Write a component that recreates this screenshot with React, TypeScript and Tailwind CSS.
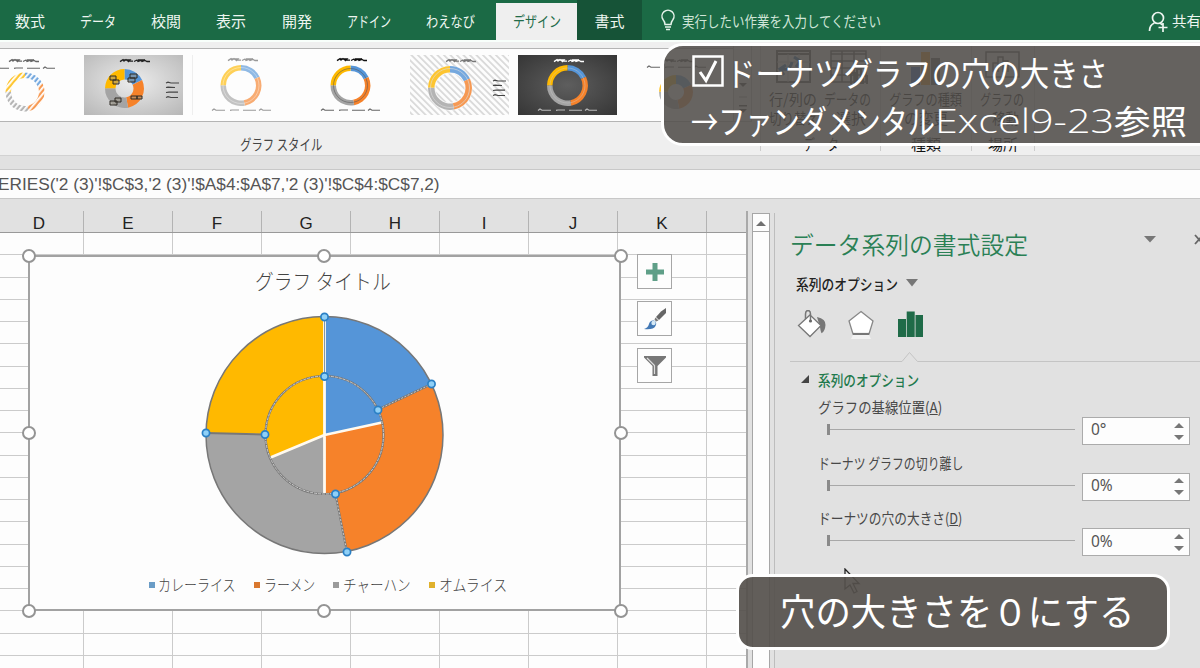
import { useLayoutEffect, useRef, useState, type ReactNode } from "react";

/* Text squeezed or stretched horizontally to a fixed width. */
function Fit({ w, className = "", children }: { w: number; className?: string; children: ReactNode }) {
  const ref = useRef<HTMLSpanElement>(null);
  const [scale, setScale] = useState(1);
  useLayoutEffect(() => {
    if (ref.current) setScale(w / ref.current.offsetWidth);
  }, [w]);
  return (
    <span className={"block shrink-0 leading-none whitespace-pre " + className} style={{ width: w }}>
      <span ref={ref} className="inline-block origin-left" style={{ transform: `scaleX(${scale})` }}>
        {children}
      </span>
    </span>
  );
}

const BLUE = "#5595d8";
const ORANGE = "#f6822a";
const GRAY = "#a4a4a4";
const YELLOW = "#ffb900";

function point(cx: number, cy: number, r: number, deg: number) {
  const a = ((deg - 90) * Math.PI) / 180;
  return [cx + r * Math.cos(a), cy + r * Math.sin(a)];
}

function ring(cx: number, cy: number, r1: number, r0: number, from: number, to: number) {
  const [ax, ay] = point(cx, cy, r1, from);
  const [bx, by] = point(cx, cy, r1, to);
  const [dx, dy] = point(cx, cy, r0, to);
  const [ex, ey] = point(cx, cy, r0, from);
  const big = to - from > 180 ? 1 : 0;
  return `M${ax} ${ay}A${r1} ${r1} 0 ${big} 1 ${bx} ${by}L${dx} ${dy}A${r0} ${r0} 0 ${big} 0 ${ex} ${ey}Z`;
}

const outer = [
  [0, 64.5, BLUE],
  [64.5, 169.3, ORANGE],
  [169.3, 271, GRAY],
  [271, 360, YELLOW],
] as const;
const inner = [
  [0, 78, BLUE],
  [78, 180, ORANGE],
  [180, 247.5, GRAY],
  [247.5, 360, YELLOW],
] as const;

function Donut({ x, y, r, hole, opacity = 1 }: { x: number; y: number; r: number; hole: number; opacity?: number }) {
  return (
    <g opacity={opacity}>
      {outer.map(([a, b, c]) => (
        <path key={a} d={ring(x, y, r, hole, a, b)} fill={c} />
      ))}
    </g>
  );
}

function Caption({ x, y, color = "#222" }: { x: number; y: number; color?: string }) {
  return (
    <path
      d={`M${x} ${y + 1.6}l3-2 1 1.500 2-1.500 2 1.500h5M${x + 3} ${y}h7l-2 2M${x + 14} ${y + 1.5}l3-1.500 1 1.500 3-1.200 1 1.200 3-1 2 1h3M${x + 18} ${y}h7`}
      stroke={color}
      strokeWidth="1.300"
      fill="none"
    />
  );
}

function LegendRow({ x, y, color = "#666" }: { x: number; y: number; color?: string }) {
  return (
    <path
      d={`M${x} ${y + 0.5}l2-1.500 2 1.200h9M${x + 18} ${y + 0.4}l2-.4h7M${x + 31} ${y + 0.2}h13M${x + 47} ${y + 0.5}l2-1.500 2 1.200h8`}
      stroke={color}
      strokeWidth="1.100"
      fill="none"
    />
  );
}

function LegendColumn({ x, y }: { x: number; y: number }) {
  return (
    <path
      d={`M${x} ${y}l2-.8 3 .8h8M${x} ${y + 4.5}l2-.4 7 .4M${x} ${y + 9.5}l3-.4h9M${x} ${y + 14.5}l2-.8 3 .8h7`}
      stroke="#444"
      strokeWidth="1.200"
      fill="none"
    />
  );
}

function Thumb({ children }: { children: ReactNode }) {
  return (
    <svg width="99" height="60" viewBox="0 0 99 60" className="shrink-0">
      {children}
    </svg>
  );
}

function Gallery() {
  return (
    <div className="mt-[6px] flex h-[74px] gap-[9.700px] border-y border-[#b4b4b4] bg-[#fdfdfd] pt-[6px] pl-[1px]">
      <div className="-ml-[26px] h-[60px]">
        <Thumb>
          <defs>
            <pattern id="stripes" width="4" height="4" patternUnits="userSpaceOnUse" patternTransform="rotate(40)">
              <rect width="1.800" height="4" fill="#fff" />
            </pattern>
          </defs>
          <Donut x={50} y={37} r={19.5} hole={14} opacity={0.8} />
          <circle cx="50" cy="37" r="17" stroke="url(#stripes)" strokeWidth="7" fill="none" />
          <Caption x={34} y={5} color="#666" />
          <LegendRow x={21} y={13} />
        </Thumb>
      </div>
      <Thumb>
        <defs>
          <radialGradient id="silver" cx=".5" cy=".45" r=".75">
            <stop offset="0" stopColor="#ececec" />
            <stop offset="1" stopColor="#b6b6b6" />
          </radialGradient>
        </defs>
        <rect width="99" height="60" fill="url(#silver)" />
        <Donut x={40.5} y={33.5} r={19.5} hole={9} />
        <g fill="#9a9484" fillOpacity=".5" stroke="#2e2a24" strokeWidth="1">
          <path d="M26 21h6v4h-6zM29 25h6v4h-6zM46 19h7v4h-7zM44 23h7v4h-7zM31 43h6v4h-6zM26 46h7v4h-7zM47 41h6v3h-6zM53 41h5v3h-5z" />
        </g>
        <Caption x={36} y={5} />
        <LegendColumn x={82} y={28} />
      </Thumb>
      <Thumb>
        <path d="M.5 0v60" stroke="#eee" />
        <Donut x={49} y={30.5} r={20.5} hole={15} opacity={0.65} />
        <circle cx="49" cy="30.500" r="18" stroke="#fff" strokeOpacity=".35" fill="none" />
        <Caption x={36} y={4} color="#999" />
        <LegendRow x={20} y={55} color="#999" />
      </Thumb>
      <Thumb>
        <Donut x={49.5} y={30.5} r={20} hole={14.5} />
        <circle cx="49.500" cy="30.500" r="17" stroke="#555" strokeOpacity=".55" fill="none" />
        <Caption x={36} y={4} color="#111" />
        <LegendRow x={20} y={55} />
      </Thumb>
      <Thumb>
        <defs>
          <pattern id="hatch" width="4.600" height="4.600" patternUnits="userSpaceOnUse" patternTransform="rotate(-45)">
            <rect width="1.800" height="4.600" fill="#dadada" />
          </pattern>
        </defs>
        <rect width="99" height="60" fill="url(#hatch)" />
        <circle cx="40" cy="33" r="18.500" stroke="#f8f8f8" strokeWidth="8" fill="none" />
        <Donut x={40} y={33} r={22} hole={15.5} opacity={0.8} />
        <circle cx="40" cy="33" r="19.500" stroke="#ddd" strokeOpacity=".6" fill="none" />
        <Caption x={36} y={5} color="#777" />
        <LegendColumn x={83} y={26} />
      </Thumb>
      <Thumb>
        <defs>
          <radialGradient id="dark" cx=".5" cy=".5" r=".7">
            <stop offset="0" stopColor="#5e5e5e" />
            <stop offset="1" stopColor="#363636" />
          </radialGradient>
        </defs>
        <rect width="99" height="60" fill="url(#dark)" />
        <Donut x={49.5} y={30.5} r={20.5} hole={15} />
        <circle cx="49.500" cy="30.500" r="17.500" stroke="#ccc" strokeOpacity=".4" fill="none" />
        <Caption x={36} y={5} color="#fff" />
        <LegendRow x={20} y={55} color="#bbb" />
      </Thumb>
      <Thumb>
        <Donut x={49} y={37} r={17} hole={8} opacity={0.8} />
        <Caption x={36} y={5} color="#555" />
        <LegendRow x={20} y={12} />
      </Thumb>
    </div>
  );
}

function RibbonButtons() {
  return (
    <div className="absolute top-[43px] left-[733px] flex h-[108px] w-[467px] bg-[#efefef] text-[15px] text-[#111]">
      <div className="flex h-[79px] w-[19px] flex-col items-center border-x border-b border-[#bbb] pt-[40px]">
        <svg width="8" height="34" viewBox="0 0 8 34">
          <path d="M0 0h8L4 4zM0 22h8v1.500H0zM0 26h8l-4 4z" fill="#444" />
          <path d="M0 14h8" stroke="#999" />
        </svg>
      </div>
      <div className="ml-[8px] flex w-[121px] flex-col border-x border-[#ccc]">
        <div className="flex pt-[6px] pl-2">
          <svg width="110" height="40" viewBox="0 0 110 40" fill="none" stroke="#555">
            <path d="M8 2h33v31H8zM8 5h33" strokeWidth="2" />
            <path d="M8 13h33M8 21h33M19 5v28M30 5v28" stroke="#bbb" />
            <path d="M15 26l-4-6 6-4M13 20q8 2 10-7M25 8l6 4-4 6" stroke="#2d6fae" strokeWidth="3" />
            <path d="M62 2h35v31H62zM62 5h35M62 12h35M62 19h35M62 26h35M73 2v31M85 2v31" strokeWidth="1.500" />
            <path d="M82 35V24h4v11M88 35V20h4v15M94 35V27h4v8" strokeWidth="2" />
          </svg>
        </div>
        <div className="mt-[2px] flex gap-[7px] pl-2">
          <Fit w={48}>行/列の</Fit>
          <Fit w={47}>データの</Fit>
        </div>
        <div className="mt-1 flex gap-[17px] pl-2">
          <Fit w={50}>切り替え</Fit>
          <Fit w={30}>選択</Fit>
        </div>
        <div className="mt-auto pl-[42px]"><Fit w={36}>データ</Fit></div>
      </div>
      <div className="flex w-[91px] flex-col border-r border-[#ccc] pl-2">
        <svg width="72" height="40" viewBox="0 0 72 40" className="mt-[6px]">
          <path d="M22 18h9v18h-9z" fill="#3a6cc8" />
          <path d="M32 3h9v33h-9z" fill="#f09a20" />
          <path d="M42 9h9v27h-9z" fill="#666" />
        </svg>
        <div className="mt-[2px]"><Fit w={73}>グラフの種類</Fit></div>
        <div className="mt-1 pl-[15px]"><Fit w={44}>の変更</Fit></div>
        <div className="mt-auto pl-[22px]"><Fit w={30}>種類</Fit></div>
      </div>
      <div className="flex w-[63px] flex-col border-r border-[#ccc] pl-2">
        <svg width="44" height="40" viewBox="0 0 44 40" className="mt-[6px]" fill="none" stroke="#555">
          <path d="M6 3h33v25H6z" strokeWidth="1.500" />
          <path d="M13 23v-9h5v9M18 23V8h5v15M23 23V12h5v11" strokeWidth="1.500" />
        </svg>
        <div className="mt-[2px]"><Fit w={44}>グラフの</Fit></div>
        <div className="mt-1 pl-[12px]"><Fit w={27}>移動</Fit></div>
        <div className="mt-auto pl-[8px]"><Fit w={30}>場所</Fit></div>
      </div>
    </div>
  );
}

function Tabs() {
  return (
    <nav className="flex h-[40px] shrink-0 bg-[#1b6a45] text-[15px] text-[#eef6f1]">
      <div className="flex items-center pl-[15px]">
        <Fit w={30}>数式</Fit>
        <Fit w={36} className="ml-[35px]">データ</Fit>
        <Fit w={30} className="ml-[35px]">校閲</Fit>
        <Fit w={30} className="ml-[35px]">表示</Fit>
        <Fit w={30} className="ml-[36px]">開発</Fit>
        <Fit w={44} className="ml-[35px]">アドイン</Fit>
        <Fit w={49} className="ml-[35px]">わえなび</Fit>
      </div>
      <div className="mt-[3px] ml-auto flex w-[81px] items-center justify-center bg-[#efefef] pb-[3px] text-[#226b49]">
        <Fit w={48}>デザイン</Fit>
      </div>
      <div className="flex w-[65px] items-center justify-center bg-[#165337]">
        <Fit w={30}>書式</Fit>
      </div>
      <div className="flex w-[558px] items-center pl-[18px] text-[#cfe5d8]">
        <svg width="16" height="22" viewBox="0 0 16 22" fill="none" stroke="#e6f3eb" strokeWidth="1.500">
          <path d="M5 15.500q0-2.500-2-5a6 6 0 1 1 10 0q-2 2.500-2 5zM5 18h6M6 20.500h4" />
        </svg>
        <Fit w={199} className="ml-[6px]">実行したい作業を入力してください</Fit>
        <svg width="21" height="21" viewBox="0 0 21 21" className="mt-[2px] ml-[267px] shrink-0" fill="none" stroke="#eef6f1" strokeWidth="1.700">
          <circle cx="10" cy="7" r="5.500" />
          <path d="M1.500 20q0-6 5-8M12 12q1.500 1 2 2M10.500 16.500h9M15 12v9" />
        </svg>
        <div className="ml-[3px] w-[28px] overflow-hidden text-[#eef6f1]"><Fit w={29}>共有</Fit></div>
      </div>
    </nav>
  );
}

const handles = [
  [29, 256], [324, 256], [621, 256],
  [29, 433], [621, 433],
  [29, 610.5], [324, 610.5], [621, 610.5],
];

function Chart() {
  return (
    <>
      <div className="absolute top-[255px] left-[28px] flex h-[356px] w-[593px] flex-col border-2 border-[#a2a2a2] bg-[#fdfdfd] text-[#444]">
        <div className="pt-[13px] pl-[225px] text-[21px] font-light"><Fit w={136}>グラフ タイトル</Fit></div>
        <svg width="260" height="260" viewBox="194 305 260 260" className="mt-[14px] ml-[164px] shrink-0">
          {outer.map(([a, b, c]) => (
            <path key={a} d={ring(324.5, 435, 118.5, 59, a, b)} fill={c} />
          ))}
          {inner.map(([a, b, c]) => (
            <path key={a} d={ring(324.5, 435, 59, 0, a, b)} fill={c} />
          ))}
          <path d="M324.500 317v177M324.500 435l57.500-12.500M324.500 435l-54 22.500" stroke="#fffaf0" strokeWidth="2.800" />
          <path d="M324.500 317v59" stroke="#8298a8" strokeWidth="1" />
          <g fill="none" stroke="#777" strokeWidth="1.200">
            <circle cx="324.500" cy="435" r="118.500" strokeWidth="1.500" />
            <circle cx="324.500" cy="435" r="59" strokeWidth="2.200" />
            <path d="M431.500 384L378 409.500M347 552l-11.500-58M206 433l59 1.500" strokeWidth="2" />
          </g>
          <g fill="none" stroke="#ddd" strokeWidth=".8">
            <circle cx="324.500" cy="435" r="59" strokeDasharray="3 1" />
            <path d="M431.500 384L378 409.500M347 552l-11.500-58" strokeDasharray="2 1.500" />
          </g>
          <g fill="#8fd0f7" stroke="#2b80c5" strokeWidth="1.700">
            {[[324.5, 317], [431.5, 384], [347, 552], [206, 433], [324.5, 376.5], [378, 410], [335.5, 494], [265, 434.5]].map(
              ([x, y]) => <circle key={`${x}-${y}`} cx={x} cy={y} r="3.600" />
            )}
          </g>
        </svg>
        <div className="mt-[11px] flex items-center pl-[119px] text-[16px] font-light">
          <i className="mt-[2px] size-[6px] bg-[#6a9cc6]" /><Fit w={78} className="ml-[3px]">カレーライス</Fit>
          <i className="mt-[2px] ml-[18px] size-[6px] bg-[#d9782f]" /><Fit w={51} className="ml-[4px]">ラーメン</Fit>
          <i className="mt-[2px] ml-[18px] size-[6px] bg-[#9b9b9b]" /><Fit w={68} className="ml-[4px]">チャーハン</Fit>
          <i className="mt-[2px] ml-[18px] size-[6px] bg-[#e0b12c]" /><Fit w={68} className="ml-[4px]">オムライス</Fit>
        </div>
      </div>
      {handles.map(([x, y]) => (
        <span
          key={`${x}-${y}`}
          className="absolute size-[14px] rounded-full border-[2.500px] border-[#949494] bg-white"
          style={{ left: x - 7, top: y - 7 }}
        />
      ))}
      <div className="absolute top-[254px] left-[637px] flex flex-col gap-[12px]">
        <div className="flex size-[35px] items-center justify-center border border-[#a6a6a6] bg-[#fdfdfd]">
          <svg width="18" height="18" viewBox="0 0 18 18"><path d="M6.500 0h5v6.500H18v5h-6.500V18h-5v-6.500H0v-5h6.500z" fill="#5f9f88" /></svg>
        </div>
        <div className="flex size-[35px] items-center justify-center border border-[#a6a6a6] bg-[#fdfdfd]">
          <svg width="24" height="24" viewBox="0 0 24 24">
            <path d="M23 1v5l-7 7-3-3 5-5.500z" fill="#666" />
            <path d="M12.500 10.500l3 3-2.500 1-1.500-2z" fill="#777" />
            <path d="M1 22q4-1 5-5 1-4 5-3.500 3.500 2 1.500 5.500-2 4-11.500 3z" fill="#4379b5" />
            <circle cx="10.500" cy="16" r="2.200" fill="#d5e9f5" />
          </svg>
        </div>
        <div className="flex size-[35px] items-center justify-center border border-[#a6a6a6] bg-[#fdfdfd]">
          <svg width="24" height="22" viewBox="0 0 24 22">
            <path d="M1 1h22v1.500L14.500 11v10h-5V11L1 2.500z" fill="#777" />
            <path d="M4 3l7.500 7.500V19" stroke="#ddd" strokeWidth="1.200" fill="none" />
          </svg>
        </div>
      </div>
    </>
  );
}

const columns = ["D", "E", "F", "G", "H", "I", "J", "K", ""];

function Sheet() {
  return (
    <div className="flex w-[775px] shrink-0">
      <div className="w-[748px] shrink-0 overflow-hidden border-r-2 border-[#a9a9a9]">
        <div className="flex h-[22px] w-[973px] border-b border-[#999] font-['Liberation_Sans',sans-serif] text-[17px] text-[#222]">
          {columns.map((c, i) => (
            <div
              key={i}
              className={"flex shrink-0 items-center justify-center border-r border-[#b3b3b3] pt-[3px] leading-none " + (i === 0 ? "w-[84px] pr-[5px]" : "w-[89px]")}
            >
              {c}
            </div>
          ))}
        </div>
        {Array.from({ length: 20 }, (_, r) => (
          <div key={r} className="flex h-[22.250px] w-[973px] bg-[#fdfdfd]">
            {columns.map((_, i) => (
              <div key={i} className={"shrink-0 border-r border-b border-[#cbcbcb] " + (i === 0 ? "w-[84px]" : "w-[89px]")} />
            ))}
          </div>
        ))}
      </div>
      <div className="mt-[2px] ml-[4px] flex w-[18px] shrink-0 flex-col border-x border-t border-[#a6a6a6] bg-[#fdfdfd]">
        <div className="flex h-[18px] items-center justify-center border-b border-[#a6a6a6]">
          <svg width="10" height="6"><path d="M0 6l5-5 5 5z" fill="#707070" /></svg>
        </div>
      </div>
      <div className="mt-[2px] ml-[4px] w-px shrink-0 bg-[#bdbdbd]" />
    </div>
  );
}

function Slider({ label, w, value }: { label: ReactNode; w: number; value: string }) {
  return (
    <div className="h-[55.700px] pl-[43px]">
      <Fit w={w} className="h-[18px] text-[15px]">{label}</Fit>
      <div className="flex items-center">
        <div className="ml-[9px] flex w-[248px] items-center pb-[3px]">
          <div className="h-[11px] w-[3px] bg-[#8a8a8a]" />
          <div className="h-px flex-1 bg-[#a8a8a8]" />
        </div>
        <div className="ml-[7px] flex h-[28px] w-[108px] items-center border border-[#ababab] bg-[#fdfdfd] pr-[5px] pb-[2px] pl-[8px] font-['Noto_Sans',sans-serif] text-[15.500px] leading-none text-[#555]">
          {value}
          <svg width="10" height="17" viewBox="0 0 10 17" className="mt-[2px] ml-auto"><path d="M0 5l5-5 5 5zM0 12h10l-5 5z" fill="#777" /></svg>
        </div>
      </div>
    </div>
  );
}

function Pane() {
  return (
    <aside className="flex w-[425px] flex-col overflow-hidden pt-[20px] text-[#484848]">
      <div className="flex h-[26px] items-center pl-[15px] text-[24px] text-[#2a8055]">
        <Fit w={238} className="font-[350]">データ系列の書式設定</Fit>
        <svg width="12" height="7" className="-mt-[9px] ml-[116px] shrink-0"><path d="M0 0h12L6 6.500z" fill="#777" /></svg>
        <svg width="10" height="11" viewBox="0 0 10 11" className="-mt-[9px] ml-[38px] shrink-0"><path d="M1 1l8 9M9 1l-8 9" stroke="#666" strokeWidth="1.800" /></svg>
      </div>
      <div className="mt-[18px] flex h-[16px] items-center pl-[21px] text-[15px] font-medium text-[#222]">
        <Fit w={102}>系列のオプション</Fit>
        <svg width="12" height="8" className="ml-[8px]"><path d="M0 0h12L6 7.500z" fill="#777" /></svg>
      </div>
      <div className="mt-[19px] flex h-[30px] pl-[22px]">
        <svg width="30" height="30" viewBox="0 0 30 30">
          <path d="M20 7q9 2 8.500 8-.5 6-3.500 8-1 1-2-6z" fill="#777" />
          <path d="M13 5l11 10.500-11 11L1.500 15.500z" fill="#fff" stroke="#777" strokeWidth="1.300" />
          <path d="M8.500 9V4q0-3.500 2.500-3.500t2.500 3.500v6" fill="none" stroke="#777" strokeWidth="1.500" />
          <circle cx="13.500" cy="11" r="1.600" fill="#666" />
        </svg>
        <svg width="28" height="30" viewBox="0 0 28 30" className="ml-[20px]">
          <path d="M14 1.500L26 11l-4 13H6L2 11z" fill="#fff" stroke="#888" strokeWidth="1.300" />
          <path d="M6 24h16" stroke="#777" strokeWidth="2.200" />
          <path d="M6 25l-2 4h20l-2-4z" fill="#f2f2f2" />
        </svg>
        <svg width="26" height="28" viewBox="0 0 26 28" className="ml-[23px]">
          <path d="M0 9h8v18H0zM8.700 1.500h8V27h-8zM17.500 5H25v22h-7.500z" fill="#1f6b48" />
        </svg>
      </div>
      <svg width="410" height="14" viewBox="0 0 410 14" className="mt-[10px] ml-[15px] shrink-0">
        <path d="M0 11.500h112l7.500-9 8 9H410" fill="none" stroke="#c4c4c4" />
      </svg>
      <div className="mt-[7px] flex h-[16px] items-center pl-[26px] text-[15px] font-medium text-[#1f7a4d]">
        <svg width="8" height="8"><path d="M8 0v8H0z" fill="#444" /></svg>
        <Fit w={101} className="ml-[9px]">系列のオプション</Fit>
      </div>
      <div className="mt-[12px]">
        <Slider w={124} value="0°" label={<>グラフの基線位置(<u>A</u>)</>} />
        <Slider w={145} value="0%" label="ドーナツ グラフの切り離し" />
        <Slider w={144} value="0%" label={<>ドーナツの穴の大きさ(<u>D</u>)</>} />
      </div>
    </aside>
  );
}

export default function App() {
  return (
    <div className="relative flex h-[668px] w-[1200px] flex-col overflow-hidden bg-[#e1e1e1] font-['Noto_Sans_CJK_JP','Liberation_Sans',sans-serif]">
      <Tabs />
      <section className="h-[116px] shrink-0 border-t-2 border-b border-t-[#f8fffb] border-b-[#d2d2d2] bg-[#efefef]">
        <Gallery />
        <div className="pt-[14px] pl-[240px] text-[15px] text-[#444]"><Fit w={82}>グラフ スタイル</Fit></div>
      </section>
      <div className="mt-[13px] flex h-[30px] shrink-0 items-center border-y border-[#c8c8c8] bg-[#fdfdfd] pt-[2px] font-['Liberation_Sans',sans-serif] text-[16px] text-[#555]">
        <Fit w={442} className="-ml-[2px]">ERIES('2 (3)'!$C$3,'2 (3)'!$A$4:$A$7,'2 (3)'!$C$4:$C$7,2)</Fit>
      </div>
      <main className="mt-[12px] flex min-h-0 flex-1">
        <Sheet />
        <Pane />
      </main>
      <Chart />
      <RibbonButtons />
      <svg width="18" height="26" viewBox="0 0 18 26" className="absolute top-[568px] left-[844px]">
        <path d="M1 1v20l5-4 4 8 3-1.500-4-8h6z" fill="#eee" fillOpacity=".4" stroke="#222" strokeWidth="1.300" />
      </svg>
      <div className="absolute top-[43px] left-[661px] h-[103px] w-[560px] rounded-[22px] border-[3px] border-white bg-[#524e4b]/88 pt-[9px] pl-[27px] text-[33px] text-white">
        <div className="flex h-[34px] items-center">
          <svg width="35" height="34" viewBox="0 0 35 34" fill="none" stroke="#fff">
            <path d="M2.500 1.500h29v29h-29z" strokeWidth="2.500" />
            <path d="M9 17l6 8.500L25 6" strokeWidth="3" />
          </svg>
          <Fit w={382}>ドーナツグラフの穴の大きさ</Fit>
        </div>
        <div className="mt-[15px] flex">
          <Fit w={244}>→ファンダメンタル</Fit>
          <Fit w={179} className="font-['Open_Sans','Noto_Sans',sans-serif] font-light">Excel9-23</Fit>
          <Fit w={73}>参照</Fit>
        </div>
      </div>
      <div className="absolute top-[574px] left-[736px] flex h-[76px] w-[434px] items-center rounded-[17px] border-[3px] border-white bg-[#55504c]/92 pb-[3px] pl-[41px] text-[37px] text-white">
        <Fit w={354}>穴の大きさを０にする</Fit>
      </div>
    </div>
  );
}
